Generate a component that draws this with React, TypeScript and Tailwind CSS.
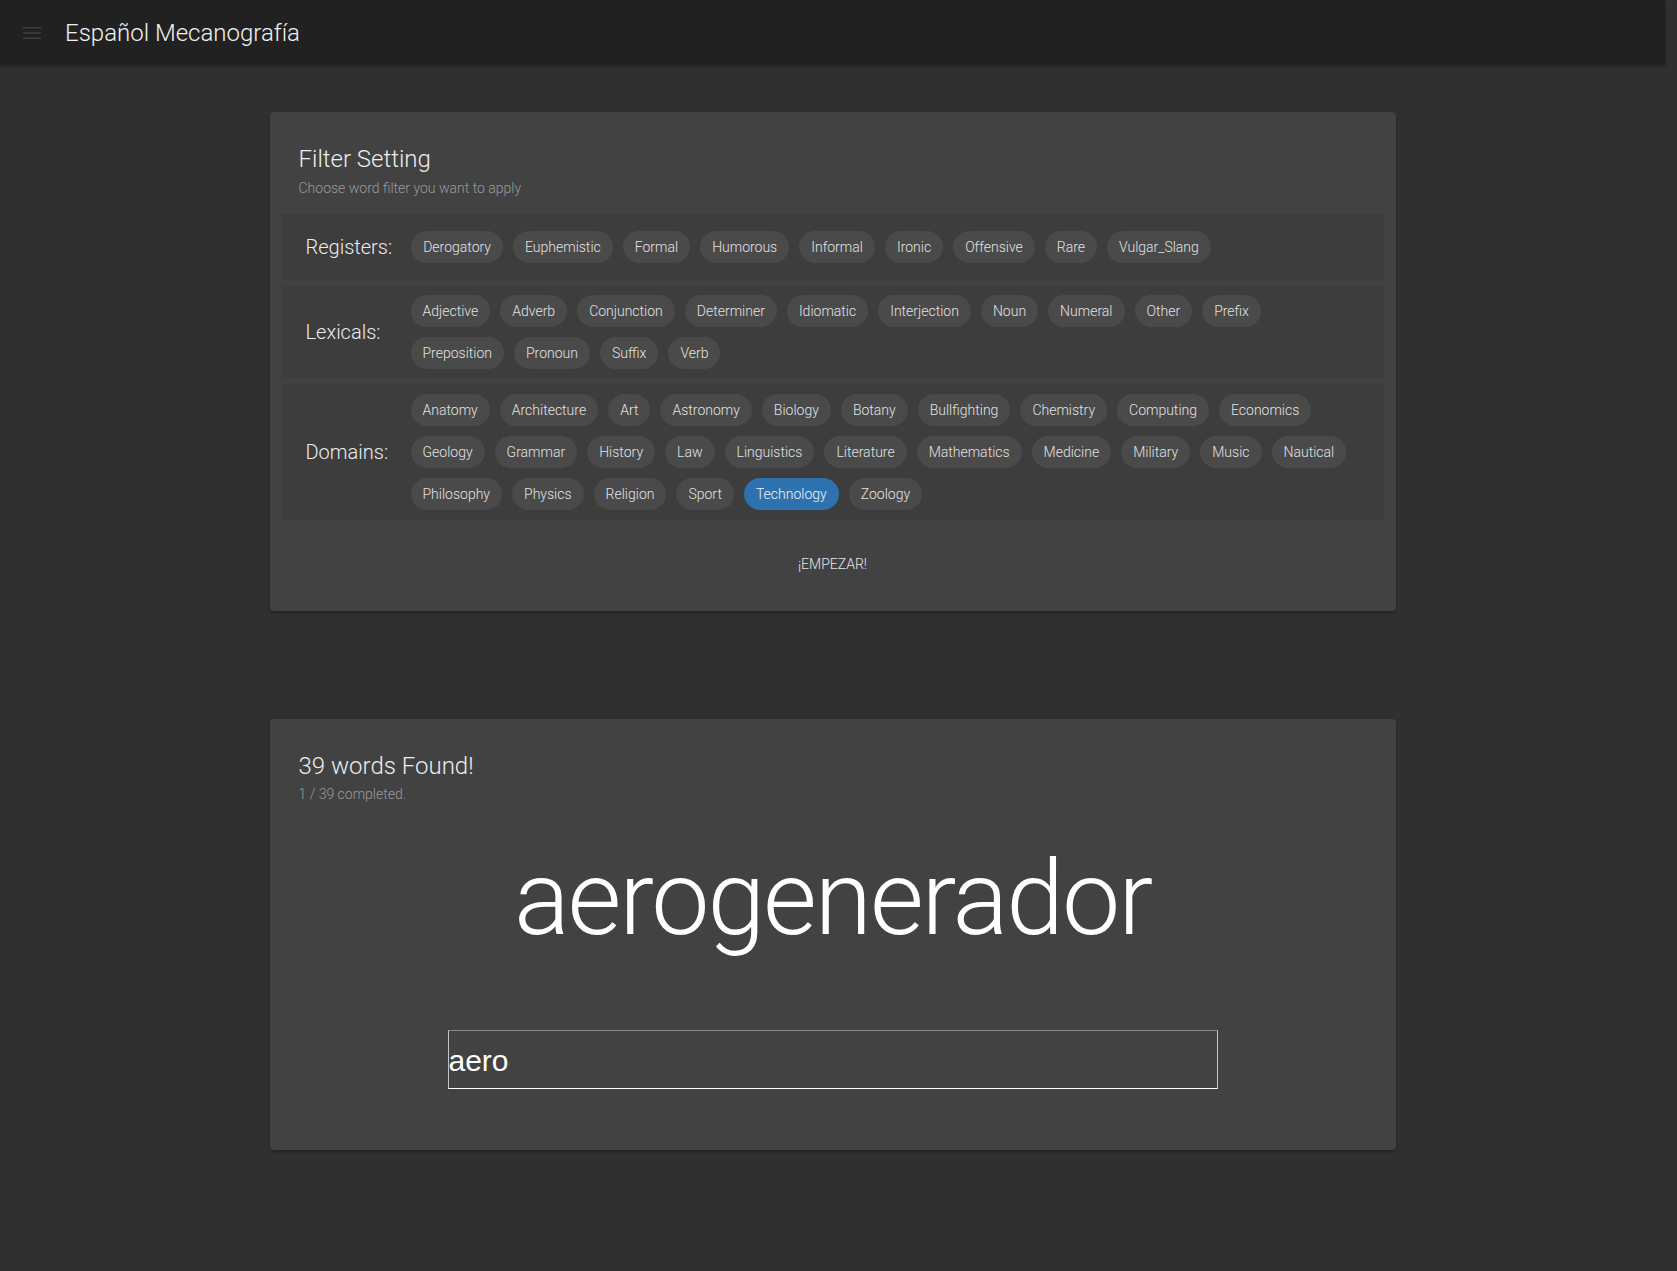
const registers = [
  "Derogatory",
  "Euphemistic",
  "Formal",
  "Humorous",
  "Informal",
  "Ironic",
  "Offensive",
  "Rare",
  "Vulgar_Slang",
];

const lexicals = [
  "Adjective",
  "Adverb",
  "Conjunction",
  "Determiner",
  "Idiomatic",
  "Interjection",
  "Noun",
  "Numeral",
  "Other",
  "Prefix",
  "Preposition",
  "Pronoun",
  "Suffix",
  "Verb",
];

const domains = [
  "Anatomy",
  "Architecture",
  "Art",
  "Astronomy",
  "Biology",
  "Botany",
  "Bullfighting",
  "Chemistry",
  "Computing",
  "Economics",
  "Geology",
  "Grammar",
  "History",
  "Law",
  "Linguistics",
  "Literature",
  "Mathematics",
  "Medicine",
  "Military",
  "Music",
  "Nautical",
  "Philosophy",
  "Physics",
  "Religion",
  "Sport",
  "Technology",
  "Zoology",
];

function Chip({ label, active }: { label: string; active?: boolean }) {
  return (
    <span
      className={
        active
          ? "flex h-8 items-center rounded-full bg-[#2d72ae] px-3 text-sm font-light text-[#eef3f8]"
          : "flex h-8 items-center rounded-full bg-[#4a4a4a] px-3 text-sm font-light text-[#e2e2e2]"
      }
    >
      {label}
    </span>
  );
}

function FilterRow({
  title,
  items,
  selected,
}: {
  title: string;
  items: string[];
  selected?: string;
}) {
  return (
    <div className="flex min-h-[66px] items-center rounded-[2px] bg-[#3d3d3d] py-[10px] pl-[24px] pr-[24px]">
      <div className="min-w-[105px] shrink-0 pr-[19px] text-[20px] font-light text-[#ececec]">
        {title}
      </div>
      <div className="flex flex-wrap gap-[10px]">
        {items.map((item) => (
          <Chip key={item} label={item} active={item === selected} />
        ))}
      </div>
    </div>
  );
}

export default function App() {
  return (
    <div className="min-h-screen bg-[#303030] pr-[12px] font-['Roboto',sans-serif] text-white">
      {/* HEADER */}
      <header className="relative z-10 flex h-16 items-center bg-[#212121] pt-[2px] shadow-[0_2px_4px_rgba(0,0,0,0.35)]">
        <svg
          className="ml-[23px] h-[12px] w-[18px]"
          viewBox="0 0 18 12"
          fill="none"
        >
          <rect x="0" y="0" width="18" height="1.6" fill="#3d3d3d" />
          <rect x="0" y="5.2" width="18" height="1.6" fill="#3d3d3d" />
          <rect x="0" y="10.4" width="18" height="1.6" fill="#3d3d3d" />
        </svg>
        <h1 className="ml-[24px] text-[24px] font-light text-[#f2f2f2]">
          Español Mecanografía
        </h1>
      </header>

      {/* FILTROS */}
      <section className="mx-auto mt-[48px] w-[1126px] rounded-[4px] bg-[#424242] px-[12px] pb-[29px] pt-[31px] shadow-[0_2px_3px_rgba(0,0,0,0.25)]">
        <div className="px-[17px]">
          <h2 className="text-[24px] font-light leading-8 text-[#ececec]">
            Filter Setting
          </h2>
          <p className="mt-[3px] text-sm font-light leading-5 text-[#9a9a9a]">
            Choose word filter you want to apply
          </p>
        </div>

        <div className="mt-[16px] flex flex-col gap-[5px]">
          <FilterRow title="Registers:" items={registers} />
          <FilterRow title="Lexicals:" items={lexicals} />
          <FilterRow title="Domains:" items={domains} selected="Technology" />
        </div>

        <div className="mt-[26px] flex justify-center">
          <button className="flex h-9 items-center px-4 text-sm font-light uppercase text-[#e6e6e6]">
            ¡Empezar!
          </button>
        </div>
      </section>

      {/* PRACTICA */}
      <section className="mx-auto mt-[108px] w-[1126px] rounded-[4px] bg-[#424242] pb-[61px] pt-[31px] shadow-[0_2px_3px_rgba(0,0,0,0.25)]">
        <div className="px-[29px]">
          <h2 className="text-[24px] font-light leading-8 text-[#ececec]">
            39 words Found!
          </h2>
          <p className="mt-[2px] text-sm font-light leading-5 text-[#9a9a9a]">
            1 / 39 completed.
          </p>
        </div>

        <p className="mt-[43px] text-center text-[104px] font-light leading-none tracking-[-0.02em] text-white">
          aerogenerador
        </p>

        <div className="mt-[79px] flex justify-center">
          <input
            readOnly
            value="aero"
            className="h-[59px] w-[770px] border border-[#c4c4c4] border-b-white border-t-[#8c8c8c] bg-transparent p-0 pt-[2px] font-['Liberation_Sans',Arial,sans-serif] text-[30px] text-white outline-none"
          />
        </div>
      </section>
    </div>
  );
}
